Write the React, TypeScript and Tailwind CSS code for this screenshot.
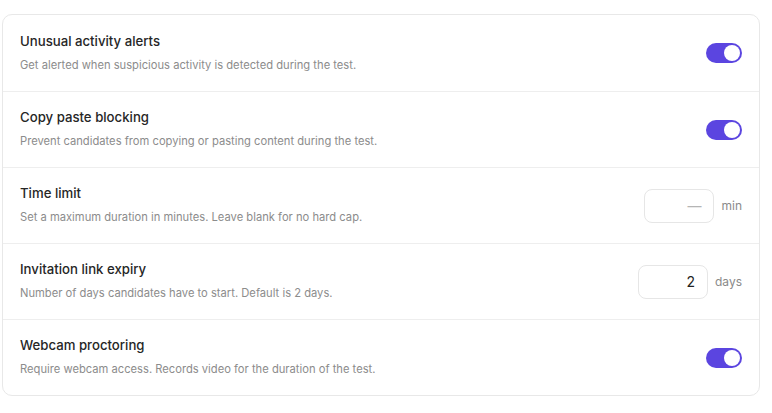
import { useState } from 'react';

type Row =
  | { id: string; title: string; desc: string; kind: 'toggle'; on: boolean }
  | { id: string; title: string; desc: string; kind: 'number'; value: string; unit: string };

const rows: Row[] = [
  { id: 'unusual', title: 'Unusual activity alerts', desc: 'Get alerted when suspicious activity is detected during the test.', kind: 'toggle', on: true },
  { id: 'paste', title: 'Copy paste blocking', desc: 'Prevent candidates from copying or pasting content during the test.', kind: 'toggle', on: true },
  { id: 'time', title: 'Time limit', desc: 'Set a maximum duration in minutes. Leave blank for no hard cap.', kind: 'number', value: '', unit: 'min' },
  { id: 'expiry', title: 'Invitation link expiry', desc: 'Number of days candidates have to start. Default is 2 days.', kind: 'number', value: '2', unit: 'days' },
  { id: 'webcam', title: 'Webcam proctoring', desc: 'Require webcam access. Records video for the duration of the test.', kind: 'toggle', on: true },
];

function Toggle({ on, onChange }: { on: boolean; onChange: () => void }) {
  return (
    <button
      onClick={onChange}
      className={`flex h-[20px] w-[36px] items-center rounded-full p-[2px] ${on ? 'justify-end bg-[#5b45e0]' : 'justify-start bg-gray-300'}`}
    >
      <span className="h-[16px] w-[16px] rounded-full bg-white" />
    </button>
  );
}

export default function App() {
  const [state, setState] = useState<Record<string, boolean>>({ unusual: true, paste: true, webcam: true });

  return (
    <div className="h-[413px] w-[772px] bg-white pl-[2px] pr-[12px] pt-[14px]" style={{ fontFamily: 'Inter, "Noto Sans", sans-serif' }}>
      <div className="rounded-[10px] border border-[#e8e8e8] bg-white">
        {rows.map((row, i) => (
          <div
            key={row.id}
            className={`flex h-[76px] items-center justify-between pl-[17px] pr-[17px] ${i > 0 ? 'border-t border-[#eeeeee]' : ''}`}
          >
            <div className="flex flex-col gap-[8px] pb-[3px]">
              <div className="text-[13.2px] font-medium leading-[18px] text-[#262626]">{row.title}</div>
              <div className="text-[11.2px] leading-[14px] text-[#8c8c8c]">{row.desc}</div>
            </div>
            {row.kind === 'toggle' ? (
              <Toggle on={state[row.id]} onChange={() => setState({ ...state, [row.id]: !state[row.id] })} />
            ) : (
              <div className="flex items-center gap-[7px]">
                <div className="flex h-[34px] w-[70px] items-center justify-end rounded-[8px] border border-[#e6e6e6] px-[12px] text-[14px] text-[#222222]">
                  {row.value || <span className="text-[#b5b5b5]">—</span>}
                </div>
                <span className="text-[12px] text-[#8a8a8a]">{row.unit}</span>
              </div>
            )}
          </div>
        ))}
      </div>
    </div>
  );
}
